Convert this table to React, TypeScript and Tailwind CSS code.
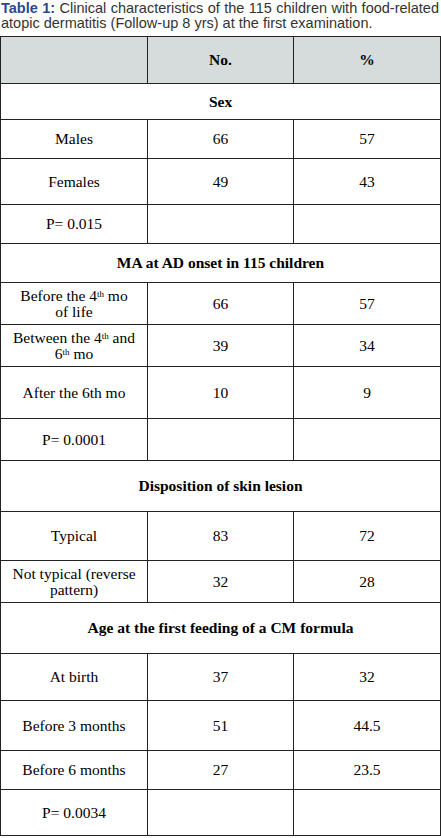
import React from "react";

type Row =
  | { kind: "section"; label: string; h: number }
  | { kind: "data"; label: React.ReactNode; no: string; pct: string; h: number };

const Th = () => <span className="relative -top-1 text-[9px] leading-none">th</span>;

const rows: Row[] = [
  { kind: "section", label: "Sex", h: 36 },
  { kind: "data", label: "Males", no: "66", pct: "57", h: 39 },
  { kind: "data", label: "Females", no: "49", pct: "43", h: 46 },
  { kind: "data", label: "P= 0.015", no: "", pct: "", h: 39 },
  { kind: "section", label: "MA at AD onset in 115 children", h: 39 },
  {
    kind: "data",
    label: (
      <>
        Before the 4<Th /> mo
        <br />
        of life
      </>
    ),
    no: "66",
    pct: "57",
    h: 42,
  },
  {
    kind: "data",
    label: (
      <>
        Between the 4<Th /> and
        <br />6<Th /> mo
      </>
    ),
    no: "39",
    pct: "34",
    h: 42,
  },
  { kind: "data", label: "After the 6th mo", no: "10", pct: "9", h: 52 },
  { kind: "data", label: "P= 0.0001", no: "", pct: "", h: 42 },
  { kind: "section", label: "Disposition of skin lesion", h: 51 },
  { kind: "data", label: "Typical", no: "83", pct: "72", h: 49 },
  {
    kind: "data",
    label: (
      <>
        Not typical (reverse
        <br />
        pattern)
      </>
    ),
    no: "32",
    pct: "28",
    h: 42,
  },
  { kind: "section", label: "Age at the first feeding of a CM formula", h: 51 },
  { kind: "data", label: "At birth", no: "37", pct: "32", h: 47 },
  { kind: "data", label: "Before 3 months", no: "51", pct: "44.5", h: 50 },
  { kind: "data", label: "Before 6 months", no: "27", pct: "23.5", h: 39 },
  { kind: "data", label: "P= 0.0034", no: "", pct: "", h: 46 },
];

const cell = "border border-[#222] text-center align-middle px-2";

export default function App() {
  return (
    <div className="w-[441px] bg-white">
      <p className="font-['Liberation_Sans',Arial,sans-serif] text-[14.5px] leading-[15px] text-[#333] text-justify pt-px pr-[2px] pl-[1px]">
        <span className="font-bold text-[#2b4a8e]">Table 1:</span> Clinical characteristics of the 115 children with
        food-related atopic dermatitis (Follow-up 8 yrs) at the first examination.
      </p>
      <table className="mt-[5px] w-[440px] border-collapse table-fixed font-['Liberation_Serif','DejaVu_Serif',serif] text-[15.5px] leading-[16px] text-black">
        <colgroup>
          <col className="w-[147px]" />
          <col className="w-[146px]" />
          <col className="w-[147px]" />
        </colgroup>
        <thead>
          <tr className="h-[47px] bg-[#d6dbdb]">
            <th className={cell}></th>
            <th className={`${cell} font-bold`}>No.</th>
            <th className={`${cell} font-bold`}>%</th>
          </tr>
        </thead>
        <tbody>
          {rows.map((r, i) =>
            r.kind === "section" ? (
              <tr key={i} style={{ height: r.h }}>
                <td colSpan={3} className={`${cell} font-bold`}>
                  {r.label}
                </td>
              </tr>
            ) : (
              <tr key={i} style={{ height: r.h }}>
                <td className={cell}>{r.label}</td>
                <td className={cell}>{r.no}</td>
                <td className={cell}>{r.pct}</td>
              </tr>
            )
          )}
        </tbody>
      </table>
    </div>
  );
}
